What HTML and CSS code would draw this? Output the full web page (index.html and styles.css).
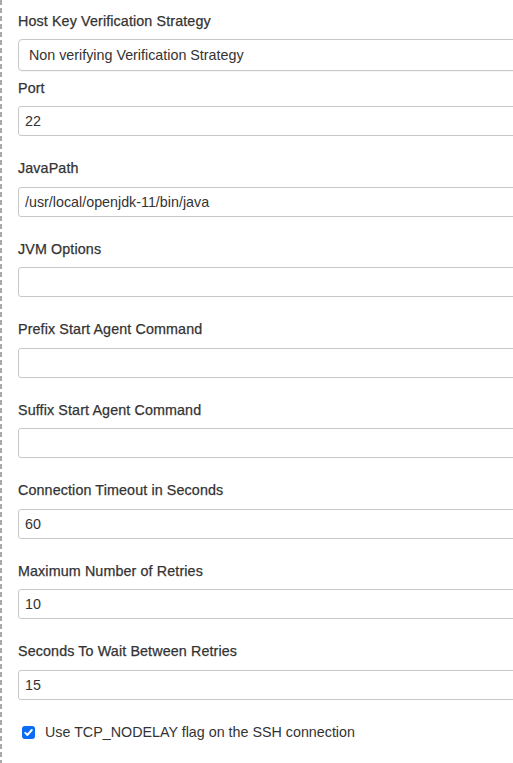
FILE: index.html
```html
<!DOCTYPE html>
<html>
<head>
<meta charset="utf-8">
<link rel="stylesheet" href="styles.css">
</head>
<body>
<div class="panel">
  <div class="field field-select">
    <label class="field-label">Host Key Verification Strategy</label>
    <select class="select"><option>Non verifying Verification Strategy</option></select>
  </div>
  <div class="field">
    <label class="field-label">Port</label>
    <input class="text" type="text" value="22">
  </div>
  <div class="field">
    <label class="field-label">JavaPath</label>
    <input class="text" type="text" value="/usr/local/openjdk-11/bin/java">
  </div>
  <div class="field">
    <label class="field-label">JVM Options</label>
    <input class="text" type="text" value="">
  </div>
  <div class="field">
    <label class="field-label">Prefix Start Agent Command</label>
    <input class="text" type="text" value="">
  </div>
  <div class="field">
    <label class="field-label">Suffix Start Agent Command</label>
    <input class="text" type="text" value="">
  </div>
  <div class="field">
    <label class="field-label">Connection Timeout in Seconds</label>
    <input class="text" type="text" value="60">
  </div>
  <div class="field">
    <label class="field-label">Maximum Number of Retries</label>
    <input class="text" type="text" value="10">
  </div>
  <div class="field">
    <label class="field-label">Seconds To Wait Between Retries</label>
    <input class="text" type="text" value="15">
  </div>
  <label class="check-row">
    <span class="checkbox"><svg width="13" height="13" viewBox="0 0 13 13"><path d="M3.2 6.8 L5.4 9 L9.8 4" fill="none" stroke="#fff" stroke-width="1.9" stroke-linecap="round" stroke-linejoin="round"/></svg></span>
    <span class="check-text">Use TCP_NODELAY flag on the SSH connection</span>
  </label>
</div>
</body>
</html>
```

FILE: styles.css
```css
html, body {
  margin: 0;
  padding: 0;
  background: #fff;
  overflow: hidden;
}
body {
  font-family: "Liberation Sans", Arial, Helvetica, sans-serif;
  font-size: 14px;
  color: #333;
}
.panel {
  padding: 13px 0 20px 18px;
  min-height: 763px;
  box-sizing: border-box;
  background-image: repeating-linear-gradient(to bottom, #aaa 0, #aaa 5px, transparent 5px, transparent 8px);
  background-size: 2px 100%;
  background-repeat: no-repeat;
  background-position: 0 0;
}
.field {
  display: flex;
  flex-direction: column;
  margin-bottom: 24px;
}
.field-select {
  margin-bottom: 8.5px;
}
.field-label {
  display: block;
  font-weight: normal;
  font-size: 14.3px;
  letter-spacing: 0.12px;
  -webkit-text-stroke: 0.25px #333;
  line-height: 17.5px;
  margin-bottom: 9px;
  color: #333;
}
.field-select .field-label {
  margin-bottom: 8.5px;
}
.select {
  appearance: none;
  -webkit-appearance: none;
  width: 620px;
  height: 32px;
  box-sizing: border-box;
  border: 1px solid #c8c8c8;
  border-radius: 4px;
  background: #fff;
  font-family: inherit;
  font-size: 14.3px;
  color: #333;
  padding: 0 10px;
  box-shadow: 0 1px 1px rgba(0,0,0,0.04);
}
.text {
  width: 620px;
  height: 30px;
  box-sizing: border-box;
  border: 1px solid #c8c8c8;
  border-radius: 3px;
  background: #fff;
  font-family: inherit;
  font-size: 14.3px;
  color: #333;
  padding: 0 6px;
  outline: none;
}
.check-row {
  display: flex;
  align-items: center;
  line-height: 17.5px;
  padding-left: 4px;
  margin-top: 0;
}
.checkbox {
  width: 13px;
  height: 13px;
  border-radius: 3px;
  background: #0a6cf5;
  display: inline-flex;
  margin-right: 10px;
  flex-shrink: 0;
}
.checkbox svg {
  display: block;
}
.check-text {
  font-size: 14.3px;
  color: #333;
}
```
